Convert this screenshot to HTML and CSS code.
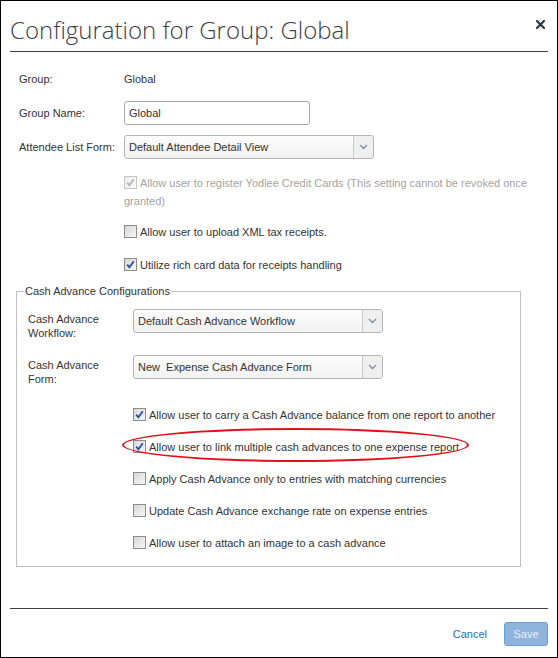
FILE: index.html
```html
<!DOCTYPE html>
<html>
<head>
<meta charset="utf-8">
<link rel="stylesheet" href="styles.css">
</head>
<body>
<div class="dialog">
  <header class="hd">
    <h1 class="title">Configuration for Group: Global</h1>
    <span class="close"><svg width="9" height="9" viewBox="0 0 9 9"><path d="M1 1L8 8M8 1L1 8" stroke="#2f3640" stroke-width="2.2" stroke-linecap="square"/></svg></span>
  </header>
  <div class="body">
    <div class="row r-group"><span class="lbl">Group:</span><span class="val">Global</span></div>
    <div class="row r-name"><span class="lbl">Group Name:</span><div class="input">Global</div></div>
    <div class="row r-att"><span class="lbl">Attendee List Form:</span>
      <div class="select"><span class="sel-text">Default Attendee Detail View</span><span class="sel-arrow"><svg width="9" height="6" viewBox="0 0 9 6"><path d="M1 1L4.5 4.5L8 1" fill="none" stroke="#7d8ea6" stroke-width="1.3"/></svg></span></div>
    </div>
    <div class="check-row main r-yod disabled"><span class="cb checked"><svg width="11" height="11" viewBox="0 0 11 11"><path d="M2.2 5.6L4.4 8.2L8.8 2.2" fill="none" stroke="#b4b4b4" stroke-width="1.8"/></svg></span>Allow user to register Yodlee Credit Cards (This setting cannot be revoked once granted)</div>
    <div class="check-row main r-xml"><span class="cb"></span>Allow user to upload XML tax receipts.</div>
    <div class="check-row main r-rich"><span class="cb checked"><svg width="11" height="11" viewBox="0 0 11 11"><path d="M2.2 5.6L4.4 8.2L8.8 2.2" fill="none" stroke="#2d4ea6" stroke-width="1.8"/></svg></span>Utilize rich card data for receipts handling</div>

    <div class="fs">
      <div class="legend">Cash Advance Configurations</div>
      <div class="fs-row r-wf"><span class="fs-lbl">Cash Advance Workflow:</span>
        <div class="select"><span class="sel-text">Default Cash Advance Workflow</span><span class="sel-arrow"><svg width="9" height="6" viewBox="0 0 9 6"><path d="M1 1L4.5 4.5L8 1" fill="none" stroke="#7d8ea6" stroke-width="1.3"/></svg></span></div>
      </div>
      <div class="fs-row r-form"><span class="fs-lbl">Cash Advance Form:</span>
        <div class="select"><span class="sel-text">New&nbsp; Expense Cash Advance Form</span><span class="sel-arrow"><svg width="9" height="6" viewBox="0 0 9 6"><path d="M1 1L4.5 4.5L8 1" fill="none" stroke="#7d8ea6" stroke-width="1.3"/></svg></span></div>
      </div>
      <div class="check-row ca first"><span class="cb checked"><svg width="11" height="11" viewBox="0 0 11 11"><path d="M2.2 5.6L4.4 8.2L8.8 2.2" fill="none" stroke="#2d4ea6" stroke-width="1.8"/></svg></span>Allow user to carry a Cash Advance balance from one report to another</div>
      <div class="check-row ca hl"><span class="ellipse"></span><span class="cb checked"><svg width="11" height="11" viewBox="0 0 11 11"><path d="M2.2 5.6L4.4 8.2L8.8 2.2" fill="none" stroke="#2d4ea6" stroke-width="1.8"/></svg></span>Allow user to link multiple cash advances to one expense report</div>
      <div class="check-row ca"><span class="cb"></span>Apply Cash Advance only to entries with matching currencies</div>
      <div class="check-row ca"><span class="cb"></span>Update Cash Advance exchange rate on expense entries</div>
      <div class="check-row ca"><span class="cb"></span>Allow user to attach an image to a cash advance</div>
    </div>
  </div>
  <footer class="ft">
    <a class="cancel">Cancel</a>
    <button class="save" type="button">Save</button>
  </footer>
</div>
</body>
</html>
```
FILE: styles.css
```css
body {
  margin: 0;
  font-family: "Liberation Sans", Arial, sans-serif;
  font-size: 11px;
  color: #333;
  background: #fff;
}
.dialog {
  width: 558px;
  height: 658px;
  box-sizing: border-box;
  border: 1px solid #000;
  padding: 0 9px;
  background: #fff;
}
.hd {
  display: flex;
  justify-content: space-between;
  align-items: flex-start;
  padding: 12px 0 4px;
  border-bottom: 1px solid #3a4047;
}
.title {
  margin: 0;
  font-family: "Open Sans", sans-serif;
  font-weight: 300;
  font-size: 24px;
  line-height: 34px;
  color: #3a4048;
}
.close {
  display: block;
  width: 9px;
  height: 9px;
  margin-top: 7px;
  margin-right: 3px;
}
.close svg { display: block; }
.body {
  padding: 18px 0 0 9px;
}
.row {
  display: flex;
  align-items: center;
  line-height: 18px;
}
.lbl {
  width: 100px;
  margin-right: 5px;
  flex: none;
}
.r-name { margin-top: 13px; }
.r-att { margin-top: 10px; }
.input {
  width: 186px;
  height: 24px;
  box-sizing: border-box;
  border: 1px solid #a9a9a9;
  border-radius: 3px;
  padding-left: 4px;
  line-height: 22px;
  background: #fff;
}
.select {
  display: flex;
  width: 250px;
  height: 24px;
  box-sizing: border-box;
  border: 1px solid #b4b4b4;
  border-radius: 3px;
  background: linear-gradient(#fdfdfd, #f2f2f2);
  overflow: hidden;
}
.sel-text {
  flex: 1;
  padding-left: 4px;
  line-height: 22px;
  white-space: nowrap;
}
.sel-arrow {
  width: 19px;
  border-left: 1px solid #c9c9c9;
  background: #efefef;
  display: flex;
  align-items: center;
  justify-content: center;
}
.sel-arrow svg { display: block; }
.check-row {
  line-height: 18px;
  margin-left: 105px;
}
.r-yod { margin-top: 15px; }
.r-xml { margin-top: 13px; }
.r-rich { margin-top: 15px; }
.disabled { color: #a3a3a3; }
.cb {
  display: inline-block;
  width: 13px;
  height: 13px;
  box-sizing: border-box;
  border: 1px solid #8c8c8c;
  background: linear-gradient(135deg, #d6d6d6, #f7f7f7);
  vertical-align: -2px;
  margin-right: 3px;
}
.cb svg { display: block; }
.disabled .cb {
  border-color: #c6c6c6;
  background: linear-gradient(135deg, #ececec, #fbfbfb);
}
.fs {
  margin: 17px 0 0 -3px;
  width: 505px;
  box-sizing: border-box;
  border: 1px solid #c0c0c0;
  padding: 0 11px 14px;
}
.legend {
  display: table;
  margin: -9px 0 0 -4px;
  padding: 0 1px;
  line-height: 16px;
  background: #fff;
}
.fs-row {
  display: flex;
  align-items: flex-start;
}
.fs-lbl {
  width: 100px;
  margin-right: 5px;
  flex: none;
  line-height: 14px;
  padding-top: 3px;
}
.r-wf { margin-top: 10px; }
.r-form { margin-top: 15px; }
.ca { margin-top: 14px; }
.ca.first { margin-top: 20px; }
.hl { position: relative; }
.ellipse {
  position: absolute;
  left: -11px;
  top: -10px;
  width: 347px;
  height: 34px;
  box-sizing: border-box;
  border: 2px solid #e3101c;
  border-radius: 50%;
  pointer-events: none;
}
.ft {
  margin-top: 41px;
  border-top: 1px solid #3a4047;
  padding-top: 13px;
  display: flex;
  justify-content: flex-end;
  align-items: center;
  gap: 17px;
}
.cancel {
  color: #2b6cb5;
  font-size: 11px;
  cursor: pointer;
}
.save {
  width: 44px;
  height: 24px;
  box-sizing: border-box;
  border: 1px solid #6e9dd0;
  border-radius: 3px;
  background: #8fb4db;
  color: #e6eef7;
  font-family: "Liberation Sans", Arial, sans-serif;
  font-size: 11px;
  padding: 0;
}
```
